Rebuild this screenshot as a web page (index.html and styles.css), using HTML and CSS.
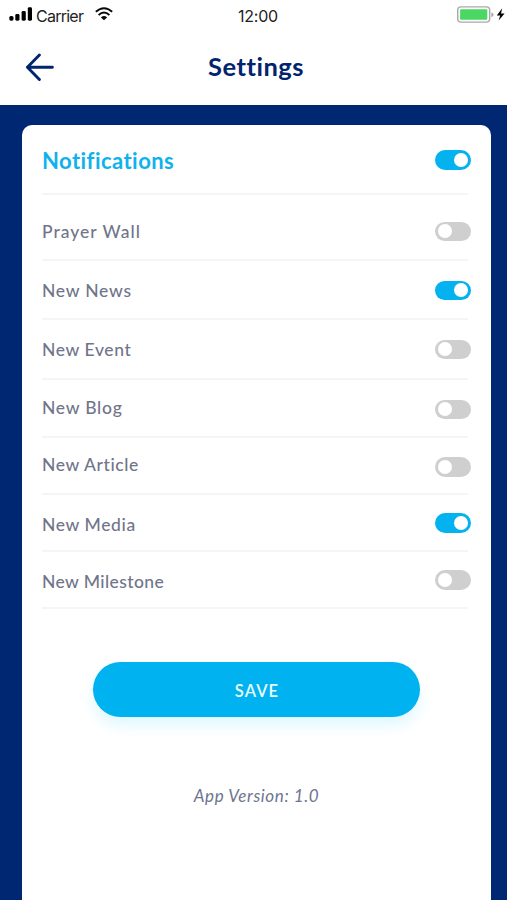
FILE: index.html
```html
<!DOCTYPE html>
<html lang="en">
<head>
    <meta charset="utf-8" />
    <title>Settings</title>
    <link rel="stylesheet" href="styles.css">
</head>
<body>
    <header>
        <div class="status">
            <div class="carrier">
                <svg width="24" height="14" viewBox="0 0 24 14">
                    <rect x="0.3" y="9" width="4.2" height="4.7" rx="1.6" />
                    <rect x="6.3" y="7" width="4.2" height="6.7" rx="1.4" />
                    <rect x="12.6" y="4" width="4.2" height="9.7" rx="1.4" />
                    <rect x="18.8" y="0.2" width="4.2" height="13.5" rx="1.4" />
                </svg>
                <span>Carrier</span>
                <svg class="wifi" width="18" height="14" viewBox="0 0 18 14" fill="none" stroke="#0b0b0b" stroke-width="1.9">
                    <path d="M0.8 4.8Q9 -2.4 17.2 4.8" />
                    <path d="M3.6 8Q9 3.2 14.4 8" />
                    <path d="M9 13.3L5.9 10.4Q9 7.8 12.1 10.4Z" fill="#0b0b0b" stroke="none" />
                </svg>
            </div>
            <span class="time">12:00</span>
            <svg class="battery" width="50" height="18" viewBox="0 0 50 18">
                <rect x="0.7" y="0.9" width="32" height="15.2" rx="3.4" fill="#fff" stroke="#a9a9a9" stroke-width="1.4" />
                <rect x="3.1" y="3.2" width="27.2" height="10.5" rx="1" fill="#4bd763" />
                <path d="M34.3 6.6Q36.6 7 36.6 8.8Q36.6 10.6 34.3 11Z" fill="#a9a9a9" />
                <path d="M45.2 2.2L39.8 9.4H43.2L41.6 14.6L47.6 7.4H44Z" fill="#000" />
            </svg>
        </div>
        <div class="bar">
            <svg class="back" width="30" height="28" viewBox="0 0 30 28" fill="none" stroke="#00246e" stroke-width="2.9" stroke-linecap="round" stroke-linejoin="round">
                <path d="M15.4 2L3.4 14.2L15.4 26.4M3.8 14.2H28.4" />
            </svg>
            <h1>Settings</h1>
        </div>
    </header>
    <main class="card">
        <ul>
            <li class="title"><h2>Notifications</h2><span class="toggle on"></span></li>
            <li class="prayer"><span class="name">Prayer Wall</span><span class="toggle"></span></li>
            <li class="news"><span class="name">New News</span><span class="toggle on"></span></li>
            <li class="event"><span class="name">New Event</span><span class="toggle"></span></li>
            <li class="blog"><span class="name">New Blog</span><span class="toggle"></span></li>
            <li class="article"><span class="name">New Article</span><span class="toggle"></span></li>
            <li class="media"><span class="name">New Media</span><span class="toggle on"></span></li>
            <li class="milestone"><span class="name">New Milestone</span><span class="toggle"></span></li>
        </ul>
        <button class="save">SAVE</button>
        <p class="version">App Version: 1.0</p>
    </main>
</body>
</html>
```
FILE: styles.css
```css
*{
    padding:0;
    margin:0;
    box-sizing:border-box;
}
body{
    height:900px;
    display:flex;
    flex-direction:column;
    overflow:hidden;
    background:#002771;
    font-family:Lato, sans-serif;
}
header{
    height:104.5px;
    background:#fff;
}
.status{
    height:32px;
    display:grid;
    grid-template-columns:1fr auto 1fr;
    font-family:Inter, sans-serif;
    font-size:16px;
    line-height:20px;
    color:#222;
    padding:6px 0 0 9px;
}
.carrier{
    display:flex;
    align-items:flex-start;
}
.carrier svg:first-child{
    margin-top:1px;
}
.carrier span{
    margin-left:3px;
    letter-spacing:-0.75px;
}
.carrier .wifi{
    margin:1px 0 0 12px;
}
.time{
    letter-spacing:-0.2px;
}
.battery{
    justify-self:end;
}
.bar{
    display:grid;
    grid-template-columns:56px 1fr 51px;
    padding-top:21px;
}
.back{
    margin-left:24px;
}
h1{
    margin-top:-1px;
    font-size:25.5px;
    line-height:28px;
    text-align:center;
    letter-spacing:0.5px;
    color:#00246e;
}
.card{
    flex:1;
    margin:20.5px 16px 0 21.5px;
    padding-left:20.5px;
    border-radius:10px 10px 0 0;
    background:#fff;
}
ul{
    list-style:none;
    width:429px;
}
li{
    display:flex;
    justify-content:space-between;
    align-items:center;
    background:linear-gradient(#f5f5f6,#f5f5f6) left bottom / 426px 2px no-repeat;
}
h2{
    padding-top:1px;
    font-size:22px;
    line-height:24px;
    letter-spacing:0.45px;
    color:#0fb2ec;
}
.name{
    font-size:17.5px;
    line-height:20px;
    letter-spacing:0.6px;
    font-weight:500;
    color:#70758a;
}
.toggle{
    width:35.7px;
    height:19.4px;
    padding:2.7px;
    border-radius:10px;
    background:#cfcfcf;
}
.toggle::before{
    content:"";
    display:block;
    width:14px;
    height:14px;
    border-radius:50%;
    background:#fff;
}
.toggle.on{
    background:#03b2ef;
}
.toggle.on::before{
    margin-left:auto;
}
/* rows are not evenly spaced, paddings set the centre line of each one */
.title{ height:70px; }
.prayer{ height:66px; padding-top:7px; }
.news{ height:59px; }
.event{ height:60px; padding-bottom:1px; }
.blog{ height:58px; padding-top:1px; }
.article{ height:57px; padding-top:1px; }
.media{ height:57px; padding-bottom:1px; }
.milestone{ height:57px; padding-bottom:1px; }
.prayer .name{ letter-spacing:1px; }
.news .name, .blog .name{ letter-spacing:0.75px; }
.blog .name{ margin-bottom:4px; }
.article .name{ margin-bottom:5px; }
.media .name, .milestone .name{ margin-top:3px; }
.milestone .name{ letter-spacing:0.4px; }
.save{
    display:block;
    width:327px;
    height:55px;
    margin:53px 0 0 51px;
    padding:2px 0 0 1px;
    border:none;
    border-radius:28px;
    background:#00b2f0;
    box-shadow:0 9px 14px rgba(0,200,255,0.12);
    font-family:Lato, sans-serif;
    font-size:16.5px;
    font-weight:600;
    letter-spacing:1.1px;
    color:#e9fbff;
}
.version{
    width:429px;
    margin-top:69px;
    font-size:17px;
    line-height:20px;
    letter-spacing:0.6px;
    font-style:italic;
    text-align:center;
    color:#6d7590;
}
```
